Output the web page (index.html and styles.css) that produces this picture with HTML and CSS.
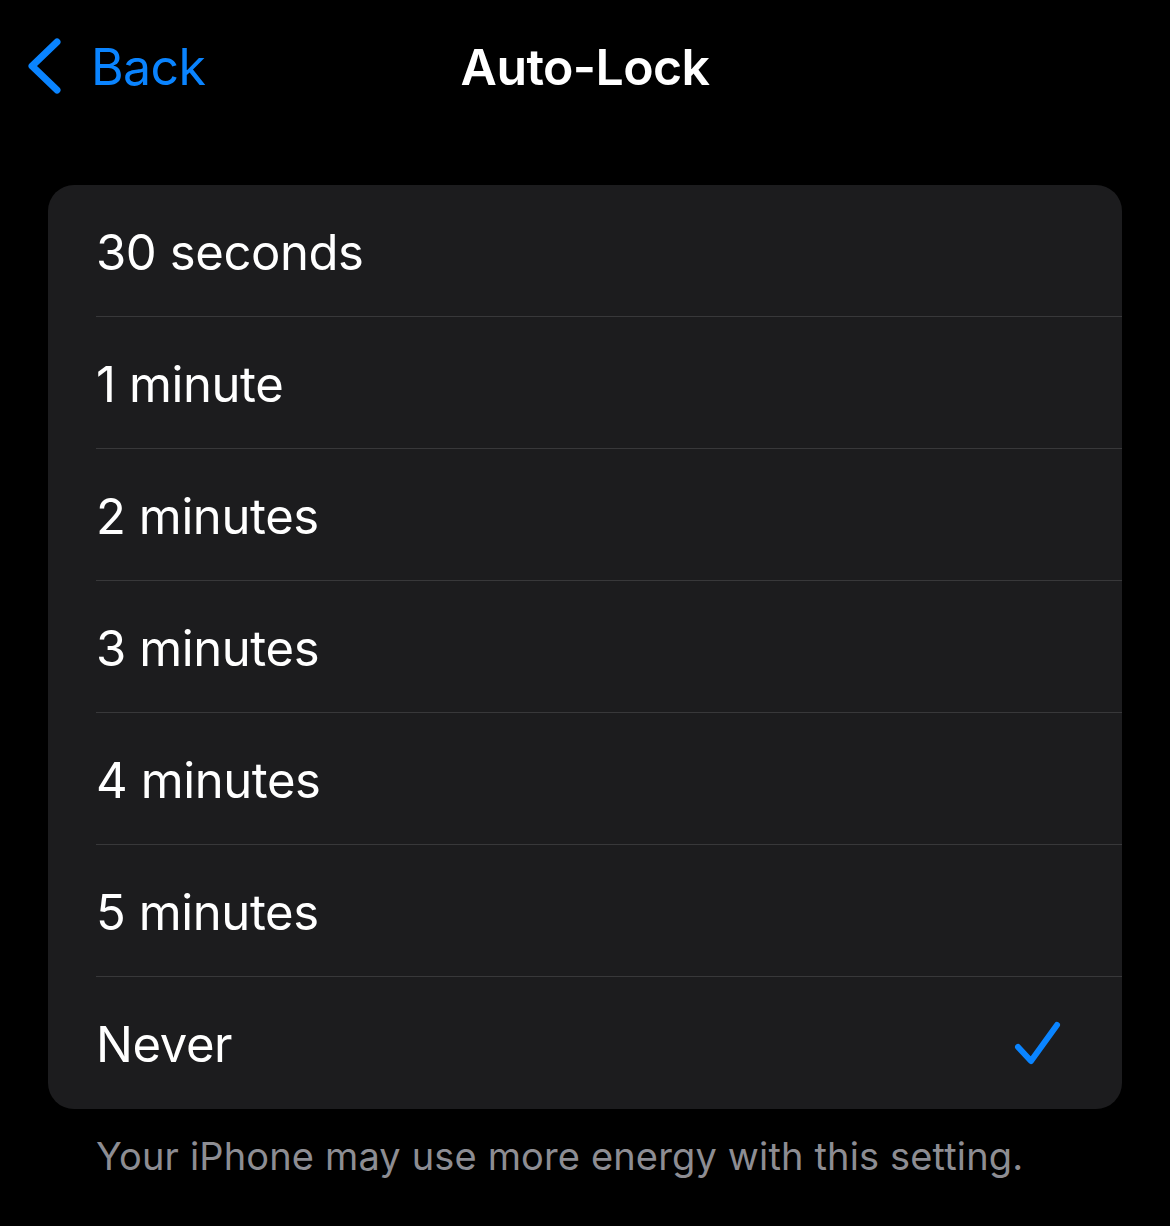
FILE: index.html
```html
<!DOCTYPE html>
<html lang="en">
<head>
  <meta charset="UTF-8">
  <meta name="viewport" content="width=device-width, initial-scale=1.0">
  <title>Auto-Lock</title>
  <link rel="stylesheet" href="styles.css">
</head>
<body>

  <div class="screen">
    <!-- Navigation bar -->
    <div class="nav">
      <a href="#" class="back">
        <svg class="chevron" viewBox="0 0 36 56" width="36" height="56">
          <path d="M31 4 L6 28 L31 52" fill="none" stroke="#0a84ff" stroke-width="7" stroke-linecap="round" stroke-linejoin="round"/>
        </svg>
        <span>Back</span>
      </a>
      <div class="nav-title">Auto-Lock</div>
    </div>

    <!-- Options list -->
    <div class="list">
      <div class="row"><span>30 seconds</span></div>
      <div class="row"><span>1 minute</span></div>
      <div class="row"><span>2 minutes</span></div>
      <div class="row"><span>3 minutes</span></div>
      <div class="row"><span>4 minutes</span></div>
      <div class="row"><span>5 minutes</span></div>
      <div class="row selected">
        <span>Never</span>
        <svg class="check" viewBox="0 0 50 48" width="50" height="48">
          <path d="M5 28 L18 42 L44 6" fill="none" stroke="#0a84ff" stroke-width="6" stroke-linecap="round" stroke-linejoin="round"/>
        </svg>
      </div>
    </div>

    <div class="footnote">Your iPhone may use more energy with this setting.</div>
  </div>

</body>
</html>
```

FILE: styles.css
```css
body, html {
  margin: 0;
  padding: 0;
  background: #000;
  font-family: Inter, "Noto Sans", sans-serif;
  color: #fff;
}

.screen {
  width: 1170px;
  height: 1226px;
  display: flex;
  flex-direction: column;
}

/* Top bar: back link and centred title */
.nav {
  height: 134px;
  display: flex;
  align-items: center;
  justify-content: center;
  position: relative;
}

.back {
  position: absolute;
  left: 26px;
  top: 35px;
  display: flex;
  align-items: center;
  gap: 29px;
  color: #0a84ff;
  text-decoration: none;
  font-size: 50px;
  letter-spacing: -0.6px;
}

.back span {
  margin-top: 2px;
}

.nav-title {
  font-size: 50px;
  font-weight: 600;
  letter-spacing: -0.6px;
  margin-top: -1px;
}

.list {
  margin: 51px 48px 0 48px;
  background: #1c1c1e;
  border-radius: 26px;
  overflow: hidden;
}

.row {
  height: 132px;
  margin-left: 48px;
  padding-right: 59px;
  padding-top: 3px;
  display: flex;
  align-items: center;
  justify-content: space-between;
  font-size: 49px;
  letter-spacing: -0.4px;
  box-sizing: border-box;
  border-bottom: 1px solid #38383a;
}

.row:last-child {
  border-bottom: none;
}

.check {
  display: block;
  margin-top: -3px;
}

.footnote {
  margin: 24px 0 0 96px;
  font-size: 38px;
  color: #8d8d93;
  letter-spacing: 0.15px;
}
```
